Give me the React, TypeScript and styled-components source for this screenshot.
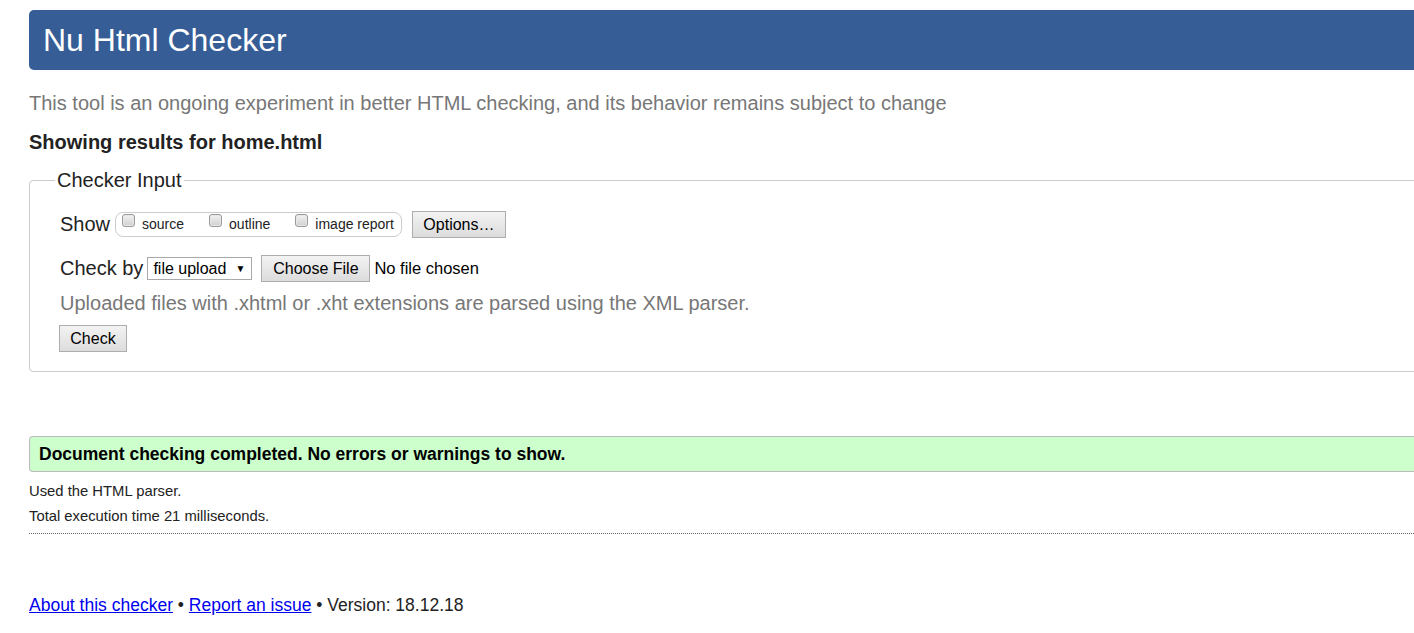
import React from "react";
import styled, { createGlobalStyle } from "styled-components";

const Global = createGlobalStyle`
  html, body { margin: 0; padding: 0; background: #fff; overflow: hidden; }
  body { font-family: Arial, "Liberation Sans", sans-serif; color: #222; }
`;

const Page = styled.div`
  padding: 10px 0 0 29px;
  width: 1460px;
  box-sizing: border-box;
`;

const Header = styled.h1`
  margin: 0;
  height: 60px;
  background: #365d95;
  border-radius: 5px 0 0 5px;
  color: #fff;
  font-weight: normal;
  font-size: 32px;
  line-height: 60px;
  padding-left: 14px;
`;

const Intro = styled.p`
  margin: 20px 0 0;
  font-size: 20px;
  line-height: 26px;
  color: #777;
`;

const ResultsFor = styled.p`
  margin: 13px 0 0;
  font-size: 20px;
  line-height: 26px;
  font-weight: bold;
  color: #222;
`;

const Fieldset = styled.fieldset`
  margin: 14px 0 0;
  border: 1px solid #ccc;
  border-radius: 4px;
  padding: 20px 0 19px 25px;
  min-width: 0;
`;

const Legend = styled.legend`
  font-size: 20px;
  color: #222;
  padding: 0 2px;
  line-height: 22px;
`;

const Content = styled.div`
  padding-left: 5px;
`;

const Row = styled.div<{ $top?: number }>`
  display: flex;
  align-items: center;
  margin-top: ${(p) => p.$top ?? 0}px;
  font-size: 20px;
`;

const Label = styled.span<{ $gap: number }>`
  font-size: 20px;
  color: #222;
  margin-right: ${(p) => p.$gap}px;
`;

const CheckGroup = styled.div`
  display: flex;
  align-items: flex-start;
  height: 23px;
  border: 1px solid #ccc;
  border-radius: 8px;
  padding: 0 7px 0 6px;
  margin-right: 10px;
`;

const CheckItem = styled.label<{ $gap?: number }>`
  display: flex;
  align-items: flex-start;
  font-size: 14px;
  color: #222;
  margin-left: ${(p) => p.$gap ?? 0}px;
  line-height: 23px;
  height: 23px;
`;

const Box = styled.span`
  width: 11px;
  height: 11px;
  margin-top: 1px;
  margin-right: 7px;
  border: 1px solid #999;
  border-radius: 3px;
  background: linear-gradient(#f2f2f2, #cfcfcf);
  box-shadow: inset 0 0 0 1px #e8e8e8;
`;

const Button = styled.button<{ $w: number; $h: number }>`
  width: ${(p) => p.$w}px;
  height: ${(p) => p.$h}px;
  padding: 0;
  font-family: Arial, "Liberation Sans", sans-serif;
  font-size: 16px;
  color: #000;
  border: 1px solid #adadad;
  border-radius: 0;
  background: linear-gradient(#f3f3f3, #dcdcdc);
`;

const Select = styled.div`
  border: 1px solid #a9a9a9;
  background: #fff;
  font-size: 16px;
  color: #000;
  display: flex;
  align-items: center;
  justify-content: space-between;
  padding: 0 6px 0 5px;
  box-sizing: border-box;
  width: 105px;
  height: 23px;
  margin-right: 9px;
`;

const Arrow = styled.span`
  font-size: 10px;
  color: #000;
`;

const FileStatus = styled.span`
  font-size: 16.5px;
  color: #000;
  margin-left: 4px;
`;

const Hint = styled.p`
  margin: 10px 0 0;
  font-size: 20px;
  line-height: 23px;
  color: #777;
`;

const CheckWrap = styled.div`
  margin-top: 10px;
  margin-left: -1px;
`;

const Success = styled.p`
  margin: 64px 0 0;
  height: 36px;
  box-sizing: border-box;
  background: #ccffcc;
  border: 1px solid #bbb;
  border-right: none;
  border-radius: 4px 0 0 4px;
  padding-left: 9px;
  font-size: 17.5px;
  font-weight: bold;
  line-height: 34px;
  color: #000;
`;

const Details = styled.div`
  border-bottom: 1px dotted #666;
  padding-bottom: 4px;
  margin-top: 7px;
`;

const DetailLine = styled.p`
  margin: 0;
  font-size: 14.8px;
  line-height: 25px;
  color: #222;
`;

const Footer = styled.p`
  margin: 60px 0 0;
  font-size: 17.5px;
  line-height: 22px;
  color: #222;
`;

const Link = styled.a`
  color: #00e;
  text-decoration: underline;
`;

export default function App() {
  return (
    <>
      <Global />
      <Page>
        <Header>Nu Html Checker</Header>
        <Intro>This tool is an ongoing experiment in better HTML checking, and its behavior remains subject to change</Intro>
        <ResultsFor>Showing results for home.html</ResultsFor>
        <Fieldset>
          <Legend>Checker Input</Legend>
          <Content>
            <Row>
              <Label $gap={5}>Show</Label>
              <CheckGroup>
                <CheckItem><Box />source</CheckItem>
                <CheckItem $gap={25}><Box />outline</CheckItem>
                <CheckItem $gap={25}><Box />image report</CheckItem>
              </CheckGroup>
              <Button $w={94} $h={27}>Options…</Button>
            </Row>
            <Row $top={17}>
              <Label $gap={4}>Check by</Label>
              <Select>
                <span>file upload</span>
                <Arrow>▼</Arrow>
              </Select>
              <Button $w={109} $h={27}>Choose File</Button>
              <FileStatus>No file chosen</FileStatus>
            </Row>
            <Hint>Uploaded files with .xhtml or .xht extensions are parsed using the XML parser.</Hint>
            <CheckWrap>
              <Button $w={68} $h={27}>Check</Button>
            </CheckWrap>
          </Content>
        </Fieldset>
        <Success>Document checking completed. No errors or warnings to show.</Success>
        <Details>
          <DetailLine>Used the HTML parser.</DetailLine>
          <DetailLine>Total execution time 21 milliseconds.</DetailLine>
        </Details>
        <Footer>
          <Link href="#">About this checker</Link> • <Link href="#">Report an issue</Link> • Version: 18.12.18
        </Footer>
      </Page>
    </>
  );
}
